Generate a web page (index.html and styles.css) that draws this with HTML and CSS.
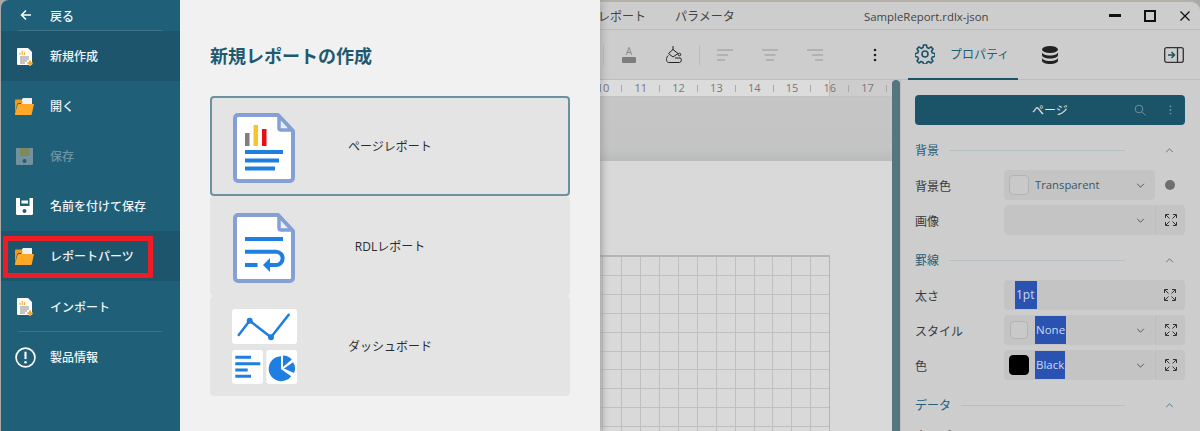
FILE: index.html
```html
<!DOCTYPE html>
<html lang="ja">
<head>
<meta charset="utf-8">
<title>SampleReport.rdlx-json</title>
<link rel="stylesheet" href="styles.css">
</head>
<body>
<svg class="defs" width="0" height="0" aria-hidden="true">
  <symbol id="i-newdoc" viewBox="0 0 16 18">
    <path d="M0 1a1 1 0 0 1 1-1h10l4 4v12a1 1 0 0 1-1 1H1a1 1 0 0 1-1-1z" fill="#fff"/>
    <path d="M3 7V4.500M5.200 7V2.500M7.400 7V4" stroke="#f5a623" stroke-width="1"/>
    <path d="M3 9h9M3 11h9M3 13h7M3 15h5" stroke="#8a8a8a" stroke-width="1"/>
    <path d="M13 12.500v5.500M10.300 15.300h5.500" stroke="#f5a623" stroke-width="2"/>
  </symbol>
  <symbol id="i-folder" viewBox="0 0 19 17">
    <path d="M8 0h8.500a.5.500 0 0 1 .5.500V6H6.500V2z" fill="#fff" opacity=".92"/>
    <path d="M0 2.500A1 1 0 0 1 1 1.500h5L7.500 3.500V5H4a2 2 0 0 0-2 1.500L0 15z" fill="#f09a1a"/>
    <path d="M4 6h15L16.800 16a1 1 0 0 1-1 1H0V15.500L2.500 7A1.500 1.500 0 0 1 4 6z" fill="#ffa726"/>
  </symbol>
  <symbol id="i-save" viewBox="0 0 17 17">
    <path d="M0 0h17v15.500a1.500 1.500 0 0 1-1.500 1.500h-14A1.500 1.500 0 0 1 0 15.500z" fill="currentColor"/>
    <rect x="4" y="0" width="9.500" height="8" fill="var(--save-in)"/>
    <rect x="5.500" y="2.500" width="6.500" height="3" fill="var(--save-bar)"/>
    <circle cx="8.500" cy="13" r="2" fill="#1f5f78"/>
  </symbol>
  <symbol id="i-expand" viewBox="0 0 12 12">
    <path d="M.5 4V.5H4M8 .5h3.500V4M.5 8v3.500H4M8 11.500h3.500V8M1 1l3.500 3.500M11 1 7.500 4.500M1 11l3.500-3.500M11 11 7.500 7.500" fill="none" stroke="#333" stroke-width="1"/>
  </symbol>
  <symbol id="i-chev" viewBox="0 0 10 6">
    <path d="M1 1l4 4 4-4" fill="none" stroke="currentColor" stroke-width="1.200"/>
  </symbol>
  <symbol id="i-up" viewBox="0 0 10 6">
    <path d="M1 5l4-4 4 4" fill="none" stroke="currentColor" stroke-width="1.200"/>
  </symbol>
  <symbol id="i-kebab" viewBox="0 0 4 14">
    <circle cx="2" cy="2" r="1.300" fill="currentColor"/>
    <circle cx="2" cy="7" r="1.300" fill="currentColor"/>
    <circle cx="2" cy="12" r="1.300" fill="currentColor"/>
  </symbol>
  <symbol id="i-docframe" viewBox="0 0 62 70">
    <path d="M5 2h40l15 16v47a3 3 0 0 1-3 3H5a3 3 0 0 1-3-3V5a3 3 0 0 1 3-3z" fill="#fff" stroke="#84a0d4" stroke-width="4" stroke-linejoin="round"/>
    <path d="M46 3v12a2 2 0 0 0 2 2h11z" fill="#e9eef8" stroke="#84a0d4" stroke-width="3.500" stroke-linejoin="round"/>
  </symbol>
</svg>

<div class="screen">
  <nav class="side">
    <a class="nav nav-back">
      <svg class="ic-back" viewBox="0 0 12 12"><path d="M11 6H1.500M6 1.500 1.500 6 6 10.500" fill="none" stroke="#fff" stroke-width="1.500"/></svg>
      <span>戻る</span>
    </a>
    <a class="nav nav-active"><svg class="ic ic-doc"><use href="#i-newdoc"/></svg><span>新規作成</span></a>
    <a class="nav"><svg class="ic ic-fold"><use href="#i-folder"/></svg><span>開く</span></a>
    <a class="nav nav-off"><svg class="ic ic-save ic-save-off"><use href="#i-save"/></svg><span>保存</span></a>
    <a class="nav"><svg class="ic ic-save"><use href="#i-save"/></svg><span>名前を付けて保存</span></a>
    <a class="nav nav-active nav-mark"><svg class="ic ic-fold"><use href="#i-folder"/></svg><span>レポートパーツ</span><i class="redbox"></i></a>
    <a class="nav nav-rule"><svg class="ic ic-doc"><use href="#i-newdoc"/></svg><span>インポート</span></a>
    <a class="nav"><svg class="ic ic-info" viewBox="0 0 20 20"><circle cx="10" cy="10" r="9" fill="none" stroke="#fff" stroke-width="1.600"/><path d="M10 4.500v7" stroke="#fff" stroke-width="2"/><circle cx="10" cy="14.500" r="1.200" fill="#fff"/></svg><span>製品情報</span></a>
  </nav>

  <section class="newpanel">
    <h1 class="np-title">新規レポートの作成</h1>
    <div class="cards">
      <button class="card card-on">
        <svg class="card-ic" viewBox="0 0 62 70">
          <use href="#i-docframe" width="62" height="70"/>
          <rect x="12" y="20" width="4.500" height="13" fill="#7f7f7f"/>
          <rect x="20.500" y="12" width="4.500" height="21" fill="#f7c52d"/>
          <rect x="29" y="16" width="4.500" height="17" fill="#e81010"/>
          <path d="M12 39h38M12 47.500h34M12 55.500h30" stroke="#1f7fe0" stroke-width="4"/>
        </svg>
        <span class="card-label">ページレポート</span>
      </button>
      <button class="card">
        <svg class="card-ic" viewBox="0 0 62 70">
          <use href="#i-docframe" width="62" height="70"/>
          <path d="M12 26h38M12 38.700h31a6.650 6.650 0 0 1 0 13.300H34M12 52h12.500" fill="none" stroke="#1f7fe0" stroke-width="4"/>
          <path d="M30 52l7-7v14z" fill="#1f7fe0"/>
        </svg>
        <span class="card-label">RDLレポート</span>
      </button>
      <button class="card">
        <svg class="card-ic card-ic-dash" viewBox="0 0 65 75">
          <rect width="65" height="35" rx="3" fill="#fff"/>
          <path d="M6.700 26 17.700 11.700 39 28.300 56.700 5.700" fill="none" stroke="#1f7fe0" stroke-width="2.500" stroke-linecap="round"/>
          <circle cx="17.700" cy="11.700" r="3" fill="#1f7fe0"/><circle cx="39" cy="28.300" r="3" fill="#1f7fe0"/>
          <rect y="41" width="31" height="34" rx="3" fill="#fff"/>
          <path d="M3.300 48.300H19M3.300 54.700H28.300M3.300 61H15.700M3.300 67.300H19" stroke="#1f7fe0" stroke-width="3"/>
          <rect x="34.300" y="41" width="31" height="34" rx="3" fill="#fff"/>
          <path d="M49 47.200A12.500 12.500 0 1 0 59.200 67.200L49 60z" fill="#1f7fe0"/>
          <path d="M51 46.500A11.500 11.500 0 0 1 59.800 50.600L51 58z" fill="#1f7fe0"/>
          <path d="M61 53.200A11 11 0 0 1 62 64.100L52 59.500z" fill="#1f7fe0"/>
        </svg>
        <span class="card-label">ダッシュボード</span>
      </button>
    </div>
  </section>

  <div class="app">
    <header class="titlebar">
      <div class="menus"><span class="menu-clip">レポート</span><span>パラメータ</span></div>
      <div class="doc-name">SampleReport.rdlx-json</div>
      <div class="winctl">
        <i class="w-min"></i><i class="w-max"></i>
        <svg class="w-close" viewBox="0 0 10 10"><path d="M.5.5l9 9M9.500.5l-9 9" stroke="#111" stroke-width="1.300"/></svg>
      </div>
    </header>

    <div class="toolrow">
      <div class="tools">
        <i class="sep"></i>
        <svg class="t-ic t-a" viewBox="0 0 14 17"><text x="7" y="9" text-anchor="middle" class="t-a-l">A</text><rect x="0" y="11" width="14" height="6" rx="1" fill="#7e7e7e"/></svg>
        <svg class="t-ic t-fill" viewBox="0 0 16 17"><path d="M7 0v4M2.500 7.500 7 3.500l5 4-5 3.500z" fill="none" stroke="#222" stroke-width="1"/><path d="M2.500 9.500C-.5 11 .2 16.500 2.500 16.500h11c1.800 0 2.500-3 1-4.500H9" fill="none" stroke="#222" stroke-width="1"/><circle cx="13.500" cy="8.500" r="1.300" fill="none" stroke="#222" stroke-width="1"/></svg>
        <i class="sep sep2"></i>
        <svg class="t-ic t-al" viewBox="0 0 16 12"><path d="M0 1h16M0 6h11M0 11h8" stroke="#a9a9a9" stroke-width="1.500"/></svg>
        <svg class="t-ic t-al" viewBox="0 0 16 12"><path d="M0 1h16M2.500 6h11M4 11h8" stroke="#a9a9a9" stroke-width="1.500"/></svg>
        <svg class="t-ic t-al" viewBox="0 0 16 12"><path d="M0 1h16M5 6h11M8 11h8" stroke="#a9a9a9" stroke-width="1.500"/></svg>
        <svg class="t-kebab"><use href="#i-kebab"/></svg>
      </div>
      <div class="ptabs">
        <div class="ptab">
          <svg class="gear" viewBox="0 0 20 20"><circle cx="10" cy="10" r="3" fill="none" stroke="#1b5369" stroke-width="1.600"/><path d="M8.500 1h3l.5 2.600 1.800.8L16 2.900 18 5l-1.500 2.200.8 1.800 2.700.5v3l-2.700.5-.8 1.800L18 17l-2 2-2.200-1.500-1.800.8-.5 1.700h-3L8 18.300l-1.800-.8L4 19l-2-2 1.500-2.200-.8-1.800L0 12.500v-3l2.700-.5.8-1.800L2 5l2-2.100 2.200 1.500L8 3.600z" fill="none" stroke="#1b5369" stroke-width="1.600" stroke-linejoin="round"/></svg>
          <span>プロパティ</span>
        </div>
        <svg class="db" viewBox="0 0 16 18"><ellipse cx="8" cy="3.500" rx="8" ry="3.500" fill="#222"/><path d="M0 6c0 2 3.500 3.500 8 3.500S16 8 16 6v3c0 2-3.500 3.500-8 3.500S0 11 0 9zM0 11.500c0 2 3.500 3.500 8 3.500s8-1.500 8-3.500v3c0 2-3.500 3.500-8 3.500s-8-1.500-8-3.500z" fill="#222"/></svg>
        <svg class="collapse" viewBox="0 0 20 16"><rect x=".7" y=".7" width="18.600" height="14.600" rx="2" fill="none" stroke="#333" stroke-width="1.300"/><path d="M13.500 1v14" stroke="#333" stroke-width="1.300"/><path d="M4 8h6M7.500 5l3 3-3 3" fill="none" stroke="#1b5369" stroke-width="1.500"/></svg>
      </div>
    </div>

    <div class="work">
      <div class="canvas">
        <div class="ruler">
          <b>10</b><u></u><b>11</b><u></u><b>12</b><u></u><b>13</b><u></u><b>14</b><u></u><b>15</b><u></u><b>16</b><u></u><b>17</b><u></u>
        </div>
        <div class="band"></div>
        <div class="sheet"><div class="grid"></div></div>
      </div>
      <div class="vbar"></div>
      <aside class="props">
        <div class="p-head">
          <span>ページ</span>
          <svg class="p-search" viewBox="0 0 12 12"><circle cx="5" cy="5" r="3.800" fill="none" stroke="#6e8f9c" stroke-width="1"/><path d="M8 8l3.500 3.500" stroke="#6e8f9c" stroke-width="1"/></svg>
          <svg class="p-kebab"><use href="#i-kebab"/></svg>
        </div>

        <div class="sec"><span>背景</span><i></i><svg class="up"><use href="#i-up"/></svg></div>
        <div class="row">
          <label>背景色</label>
          <div class="field"><em class="sw"></em><span class="val">Transparent</span><svg class="chev"><use href="#i-chev"/></svg></div>
          <div class="aux"><i class="dot"></i></div>
        </div>
        <div class="row">
          <label>画像</label>
          <div class="field"><svg class="chev"><use href="#i-chev"/></svg></div>
          <div class="aux aux-box"><svg class="exp"><use href="#i-expand"/></svg></div>
        </div>

        <div class="sec sec-next"><span>罫線</span><i></i><svg class="up"><use href="#i-up"/></svg></div>
        <div class="row">
          <label>太さ</label>
          <div class="field field-join"><span class="val sel sel-plain">1pt</span></div>
          <div class="aux aux-box aux-join"><svg class="exp"><use href="#i-expand"/></svg></div>
        </div>
        <div class="row">
          <label>スタイル</label>
          <div class="field"><em class="sw sw-off"></em><span class="val sel">None</span><svg class="chev"><use href="#i-chev"/></svg></div>
          <div class="aux aux-box"><svg class="exp"><use href="#i-expand"/></svg></div>
        </div>
        <div class="row">
          <label>色</label>
          <div class="field"><em class="sw sw-black"></em><span class="val sel">Black</span><svg class="chev"><use href="#i-chev"/></svg></div>
          <div class="aux aux-box"><svg class="exp"><use href="#i-expand"/></svg></div>
        </div>

        <div class="sec sec-next"><span>データ</span><i></i><svg class="up"><use href="#i-up"/></svg></div>
        <div class="row row-tail"><label>空のプレース</label></div>
      </aside>
    </div>
  </div>
</div>
</body>
</html>
```
FILE: styles.css
```css
* { box-sizing: border-box; }
html, body { margin: 0; height: 431px; overflow: hidden; }
body { font-family: "Open Sans", "Noto Sans CJK JP", sans-serif; font-size: 12px; color: #333; background: #a9a9a9; }
.defs { position: absolute; }
.screen { display: flex; width: 1200px; height: 431px; overflow: hidden; }

/* left nav */
.side { width: 179px; flex: none; background: #1f5f78; color: #fff; margin-left: 1px; border-top-left-radius: 8px; position: relative; z-index: 3; }
.nav { display: flex; align-items: center; height: 50px; position: relative; font-size: 12px; font-weight: 500; color: #f0f4f6; }
.nav span { position: absolute; left: 49px; }
.nav-back { height: 31px; }
.nav-back::after { content: ""; position: absolute; left: 17px; right: 18px; bottom: 0; height: 1px; background: #3f7488; }
.nav-active { background: #1d566c; }
.nav-off span { color: #6f95a4; }
.nav-rule { height: 51px; }
.nav-rule::after { content: ""; position: absolute; left: 17px; right: 18px; bottom: 0; height: 1px; background: #3f7488; }
.ic-back { position: absolute; left: 19px; top: 9px; width: 12px; height: 12px; }
.ic { position: absolute; }
.ic-doc { left: 16px; top: 17px; width: 16px; height: 18px; }
.ic-fold { left: 14px; top: 17px; width: 19px; height: 17px; }
.ic-save { left: 15px; top: 17px; width: 17px; height: 17px; color: #fff; --save-in: #1f5f78; --save-bar: #fff; }
.ic-save-off { color: #73919f; --save-in: #7d8a5e; --save-bar: #7d8a5e; }
.ic-info { left: 14px; top: 15px; width: 21px; height: 21px; }
.redbox { position: absolute; left: 2px; top: 5px; width: 150px; height: 42px; border: 5px solid #ee1c25; }

/* new report panel */
.newpanel { width: 420px; flex: none; background: #f1f1f1; padding: 0 30px; box-shadow: 2px 0 8px rgba(0,0,0,.18); position: relative; z-index: 2; }
.np-title { margin: 0; padding-top: 43px; height: 96px; font-size: 18px; line-height: 26px; font-weight: 700; color: #1d5a70; }
.cards { display: flex; flex-direction: column; }
.card { display: grid; align-items: center; height: 100px; width: 360px; padding: 0; background: #e4e4e4; border: 0; border-radius: 4px; font: inherit; color: #2c2c2c; }
.card-on { border: 2px solid #6a929f; }
.card > * { grid-area: 1 / 1; }
.card-ic { width: 62px; height: 70px; justify-self: start; margin: 4px 0 0 23px; }
.card-on .card-ic { margin-left: 21px; }
.card-ic-dash { width: 65px; height: 75px; margin: 0 0 0 22px; }
.card-label { justify-self: center; font-size: 12px; }

/* app behind */
.app { flex: 1; min-width: 0; background: #cdcdcd; display: flex; flex-direction: column; border-top-right-radius: 10px; border-top: 2px solid #b5b0a8; color: #333; }
.titlebar { height: 28px; flex: none; display: flex; align-items: center; border-bottom: 1px solid #bdbdbd; position: relative; }
.menus { display: flex; gap: 29px; color: #444; padding-top: 1px; }
.menu-clip { width: 46px; overflow: hidden; direction: rtl; white-space: nowrap; }
.doc-name { position: absolute; left: 264px; top: 7px; font-size: 11.400px; color: #444; }
.winctl { position: absolute; right: 0; top: 0; width: 91px; height: 27px; display: flex; align-items: center; }
.w-min { width: 12px; height: 3px; background: #111; }
.w-max { width: 12px; height: 12px; border: 2px solid #111; margin-left: 23px; }
.w-close { width: 10px; height: 10px; margin-left: 24px; }

.toolrow { height: 50px; flex: none; display: flex; border-bottom: 1px solid #bdbdbd; }
.tools { width: 308px; flex: none; display: flex; align-items: center; padding-left: 3px; }
.sep { width: 1px; height: 20px; background: #bcbcbc; flex: none; }
.t-ic { flex: none; }
.t-a { width: 14px; height: 17px; margin-left: 18px; }
.t-a-l { font-size: 10px; fill: #8a8a8a; font-family: "Open Sans", sans-serif; }
.t-fill { width: 16px; height: 17px; margin-left: 30px; }
.sep2 { margin-left: 17px; }
.t-al { width: 16px; height: 12px; margin-left: 17px; }
.t-al + .t-al { margin-left: 29px; }
.t-kebab { width: 4px; height: 14px; margin-left: 50px; color: #222; flex: none; }
.ptabs { flex: 1; display: flex; align-items: center; }
.ptab { width: 110px; height: 50px; display: flex; align-items: center; padding-left: 7px; gap: 15px; border-bottom: 2px solid #1b5369; color: #1f5f78; margin-bottom: -1px; flex: none; }
.gear { width: 20px; height: 20px; }
.db { width: 16px; height: 18px; margin-left: 24px; }
.collapse { width: 20px; height: 16px; margin-left: 106px; }

.work { flex: 1; min-height: 0; display: flex; }
.canvas { width: 292px; flex: none; background: #d9d9d9; display: flex; flex-direction: column; overflow: hidden; }
.ruler { height: 17px; flex: none; display: flex; border-bottom: 1px solid #c2c2c2; padding-left: 0; margin-left: -15.900px; width: 400px;
  background: linear-gradient(90deg, #dcdcdc 0, #dcdcdc 245px, #b9b9b9 245px, #b9b9b9 246px, #cdcdcd 246px); }
.ruler b { width: 37.800px; flex: none; text-align: center; font-weight: 400; font-size: 11px; line-height: 16px; color: #777; }
.ruler u { width: 1px; height: 7px; margin: 5px -.5px 0; background: #a9a9a9; flex: none; }
.band { height: 64px; flex: none; background: linear-gradient(180deg, #c6c6c6 0, #c4c4c4 80%, #b9bcbc 100%); }
.sheet { flex: 1; padding: 94px 0 0 0; background: #d9d9d9; box-shadow: inset 8px 0 6px -6px rgba(0,0,0,.1); }
.grid { width: 230px; height: 200px; border-top: 2px solid #b4b4b4; border-right: 1px solid #b4b4b4;
  background-image:
    repeating-linear-gradient(90deg, transparent 0, transparent 2.300px, #bfbfbf 2.300px, #bfbfbf 3.300px, transparent 3.300px, transparent 18.900px),
    repeating-linear-gradient(180deg, transparent 0, transparent 17.900px, #bfbfbf 17.900px, #bfbfbf 18.900px); }
.vbar { width: 8px; flex: none; background: #55767f; border-top-left-radius: 4px; border-top-right-radius: 4px; }

/* properties */
.props { flex: 1; min-width: 0; padding: 15px 15px 0 14px; border-left: 1px solid #bdbdbd; overflow: hidden; }
.p-head { height: 30px; background: #1b5369; border-radius: 4px; position: relative; display: flex; align-items: center; justify-content: center; color: #e8eef0; margin-bottom: 15px; }
.p-search { position: absolute; left: 219px; top: 9px; width: 12px; height: 12px; }
.p-kebab { position: absolute; left: 254px; top: 10px; width: 3px; height: 10px; color: #6e8f9c; }
.sec { height: 20px; display: flex; align-items: center; color: #1f5f78; margin-bottom: 10px; font-size: 12px; }
.sec i { flex: 1; height: 1px; background: #b4c0c4; margin: 0 40px 0 10px; }
.sec svg.up { width: 9px; height: 5px; margin-right: 11px; color: #4f7f92; flex: none; }
.sec-next { margin-top: 15px; }
.row { display: flex; height: 30px; margin-bottom: 5px; align-items: stretch; }
.row label { width: 89px; flex: none; align-self: center; font-size: 12px; color: #3a3a3a; padding-top: 1px; }
.field { width: 151px; flex: none; background: #c4c4c4; border-radius: 4px; display: flex; align-items: center; position: relative; padding-left: 31px; }
.field-join { padding-left: 11px; border-radius: 4px 0 0 4px; }
.aux { width: 30px; flex: none; display: flex; align-items: center; justify-content: center; }
.aux-box { background: #c4c4c4; border-radius: 0 4px 4px 0; border-left: 1px solid #bdbdbd; }
.aux-join { border-left: 0; }
.dot { width: 10px; height: 10px; border-radius: 50%; background: #6f6f6f; }
.exp { width: 12px; height: 12px; }
.sw { position: absolute; left: 5px; top: 5px; width: 20px; height: 20px; border: 1px solid #b3b3b3; border-radius: 4px; background: #c9c9c9; }
.sw-off { left: 6px; top: 6px; width: 18px; height: 18px; }
.sw-black { background: #000; border-color: #000; }
.val { font-size: 11.300px; color: #39566a; line-height: 28px; white-space: nowrap; }
.sel { background: #2a52b0; color: #c9d8f0; height: 28px; padding: 0 1px; font-size: 11.500px; }
.sel-plain { font-size: 12px; padding-right: 3px; }
.chev { position: absolute; right: 10px; top: 13px; width: 9px; height: 5px; color: #555; }
.row-tail { margin-top: -5px; }
```
